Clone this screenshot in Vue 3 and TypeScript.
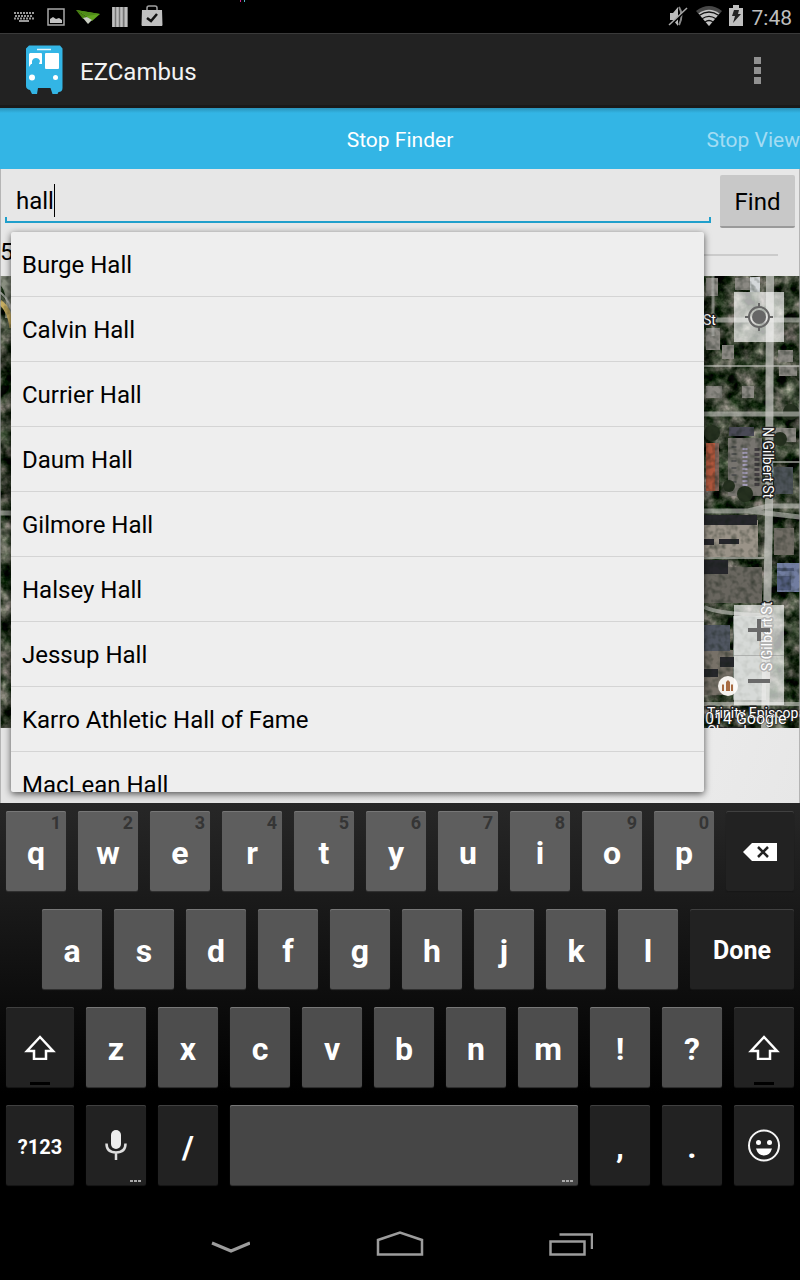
<script setup lang="ts">
import { ref } from 'vue'

interface Key {
  label: string
  hint?: string
  kind?: 'wide' | 'done' | 'space'
  dark?: boolean
  icon?: 'delete' | 'shift' | 'mic' | 'smile'
  small?: boolean
  more?: boolean
}

const query = ref('hall')
const radius = ref(5)

const stops: string[] = [
  'Burge Hall',
  'Calvin Hall',
  'Currier Hall',
  'Daum Hall',
  'Gilmore Hall',
  'Halsey Hall',
  'Jessup Hall',
  'Karro Athletic Hall of Fame',
  'MacLean Hall',
]

const letters = (text: string): Key[] => text.split('').map((label) => ({ label }))

const rows: Key[][] = [
  [
    ...'qwertyuiop'.split('').map((label, i) => ({ label, hint: String((i + 1) % 10) })),
    { label: 'Delete', icon: 'delete', kind: 'wide', dark: true },
  ],
  [...letters('asdfghjkl'), { label: 'Done', kind: 'done', dark: true }],
  [
    { label: 'Shift', icon: 'shift', kind: 'wide', dark: true },
    ...letters('zxcvbnm!?'),
    { label: 'Shift', icon: 'shift', dark: true },
  ],
  [
    { label: '?123', kind: 'wide', dark: true, small: true },
    { label: 'Voice input', icon: 'mic', dark: true, more: true },
    { label: '/', dark: true },
    { label: '', kind: 'space', more: true },
    { label: ',', dark: true },
    { label: '.', dark: true },
    { label: 'Emoji', icon: 'smile', dark: true },
  ],
]
</script>

<template>
  <div class="screen">
    <div class="status">
      <svg class="pixels" viewBox="0 0 6 2" width="6" height="2"><path d="M0 0h1v2H0z" fill="#d3258c" /><path d="M4 0h1v2H4z" fill="#4fb5c4" /></svg>
      <div class="status-group">
        <svg viewBox="14 0 22 33" width="22" height="33">
          <g fill="none" stroke="#9a9a9a" stroke-width="2">
            <path d="M14 13h20" stroke-dasharray="2 1" />
            <path d="M15 16h18" stroke-dasharray="2 1" />
            <path d="M14 18.500h20" stroke-dasharray="2 1" />
            <path d="M19 21h10" />
          </g>
        </svg>
        <svg viewBox="46 0 20 33" width="20" height="33">
          <path d="M48 9h16v16H48z" fill="none" stroke="#a8a8a8" stroke-width="1.500" />
          <path d="M50 23v-4l3-2 3 2 3-1 3 2v3z" fill="#c4c4c4" />
        </svg>
        <svg viewBox="76 0 24 33" width="24" height="33">
          <path d="M76 10l24 4-8 7-5-4z" fill="#62a51f" />
          <path d="M76 10l7 9 4-2z" fill="#4c8714" />
          <path d="M76 10l24 4-13 2z" fill="#4f8c18" />
          <path d="M83 18l4-1 5 3-4 4z" fill="#c9cfc2" />
        </svg>
        <svg viewBox="110 0 20 33" width="20" height="33">
          <path d="M112 7h16v20h-16z" fill="#777" />
          <path d="M113.500 7v20M117.500 7v20M121.500 7v20M125.800 7v20" stroke="#c0c0c0" stroke-width="2.500" />
        </svg>
        <svg viewBox="140 0 24 33" width="24" height="33">
          <path d="M147 10V8q0-2 2-2h6q2 0 2 2v2" fill="none" stroke="#a0a0a0" stroke-width="1.500" />
          <path d="M142 10h20l.5 15-.5 1h-20l-.5-1z" fill="#c0c0c0" />
          <path d="M147 18l4 3 6-7" fill="none" stroke="#111" stroke-width="2.500" />
        </svg>
      </div>
      <div class="status-group right">
        <svg viewBox="668 0 20 33" width="20" height="33">
          <path d="M670 13h3l5-6v19l-5-6h-3z" fill="#bbb" />
          <path d="M679 7q5 8 0 18" fill="none" stroke="#888" stroke-width="2" />
          <path d="M671 25L687 9" stroke="#000" stroke-width="2" />
          <path d="M669 25L687 8" stroke="#aaa" stroke-width="1.500" />
        </svg>
        <svg viewBox="696 0 26 33" width="26" height="33">
          <path d="M696 11Q709 1 722 11l-13 15z" fill="#484848" />
          <path d="M698.500 13.500Q709 6 719.500 13.500L709 26z" fill="#c4c4c4" />
          <path d="M699 15.500q10-7 20 0M702 18.800q7-5 14 0M705 22q4-3 8 0" fill="none" stroke="#111" stroke-width="1.300" />
        </svg>
        <svg viewBox="730 0 14 33" width="14" height="33" overflow="visible">
          <path d="M729 8h4V5h6v3h4v18h-14z" fill="#c0c0c0" />
          <path d="M734 10h5l-1 4h3l-8 9 2-7h-3z" fill="#222" />
        </svg>
        <span class="time">7:48</span>
      </div>
    </div>

    <header class="action-bar">
      <svg class="bus" viewBox="25 44 39 52" width="39" height="52">
        <path d="M29 45.500h31l2.500 3V88q0 4-4 4l-1 2h-5l-2-6H38l-1 6h-5l-2-4q-4-1-4-4V48.500z" fill="#33b5e5" />
        <path d="M37 49.500h14" fill="none" stroke="#e6f7fd" stroke-width="1.500" />
        <path d="M30 53h11q1 0 1 1v10h-3l1-3q-1-3-4-3t-4 3v3h-1l-2 3V54zM46 53h12q1 0 1 1v14q0 1-1 1H46q-1 0-1-1V54q0-1 1-1z" fill="#fff" />
        <circle cx="32" cy="77.500" r="3" fill="#fff" />
        <circle cx="55.500" cy="77.500" r="2.500" fill="#fff" />
      </svg>
      <h1>EZCambus</h1>
      <button class="overflow" type="button" aria-label="More options"><i></i><i></i><i></i></button>
    </header>

    <nav class="tabs">
      <a class="tab current" href="#finder">Stop Finder</a>
      <a class="tab next" href="#view">Stop View</a>
    </nav>

    <main class="content">
      <form class="search" @submit.prevent>
        <div class="field">
          <input v-model="query" type="text" aria-label="Search stops" />
          <span class="caret"></span>
        </div>
        <button class="find" type="submit">Find</button>
      </form>
      <div class="range-row">
        <label for="radius">5</label>
        <input id="radius" v-model="radius" type="range" min="0" max="20" />
      </div>

      <div class="map">
        <svg class="aerial" viewBox="0 276 800 452" preserveAspectRatio="xMaxYMin slice">
          <defs>
            <filter id="trees" x="0" y="0" width="100%" height="100%" color-interpolation-filters="sRGB">
              <feTurbulence type="fractalNoise" baseFrequency="0.07" numOctaves="4" seed="8" />
              <feColorMatrix values="1.300 0.1 0 0 -0.470  1.100 0.2 0 0 -0.380  1.200 0.1 0 0 -0.450  0 0 0 0 1" />
            </filter>
            <filter id="grain" x="0" y="0" width="100%" height="100%" color-interpolation-filters="sRGB">
              <feTurbulence type="fractalNoise" baseFrequency="0.16" numOctaves="2" seed="3" />
              <feColorMatrix values="0 0 0 0 0.080  0 0 0 0 0.120  0 0 0 0 0.080  1.800 0 0 0 -0.750" />
            </filter>
          </defs>
          <rect y="276" width="800" height="452" filter="url(#trees)" />
          <g fill="#8b8983">
            <path d="M706 278h12v18h-12zM735 278h18v12h-18zM706 328h14v22h-14zM722 345h12v14h-12zM778 350h15v12h-15zM706 386h16v12h-16zM742 386h12v12h-12zM779 366h18v10h-18zM776 428h20v14h-20z" />
            <path d="M728 438h34v58h-34z" fill="#77746f" />
            <path d="M704 520h54v37h-54z" fill="#9a9388" />
            <path d="M704 567h58v36h-58z" fill="#69665f" />
            <path d="M774 528h20v27h-20z" fill="#706c64" />
            <path d="M704 650h30v45h-30z" fill="#777168" />
            <path d="M733 616h33v84h-33z" fill="#8b948c" />
          </g>
          <path d="M750 277h10v15h-10z" fill="#d4d8da" />
          <path d="M706 443h9v48h-9z" fill="#b0573d" />
          <path d="M715 443h4v48h-4z" fill="#83635a" />
          <path d="M729 427h25v9h-25z" fill="#4a4a56" />
          <path d="M774 467h19v27h-19z" fill="#4d5359" />
          <path d="M704 515h53v10h-53zM704 539h10v6h-10zM719 539h20v5h-20zM704 560h24v14h-24z" fill="#26262b" />
          <path d="M777 563h23v29h-23z" fill="#717da0" />
          <path d="M777 568h17v3h-17zM777 576h14v14h-14z" fill="#535e80" />
          <path d="M704 625h26v26h-26z" fill="#505661" />
          <path d="M720 657h14v10h-14zM704 669h14v8h-14z" fill="#25262a" />
          <g stroke-width="5" fill="none">
            <path d="M745 448v38" stroke="#a8a0bd" stroke-dasharray="2 2" />
            <path d="M757 448v40" stroke="#443f43" stroke-dasharray="3 2" />
            <path d="M734 446v38" stroke="#555" stroke-dasharray="2 5" />
          </g>
          <g fill="#25301f">
            <circle cx="745" cy="494" r="8" /><circle cx="729" cy="486" r="6" /><circle cx="712" cy="433" r="8" />
            <circle cx="780" cy="439" r="7" /><circle cx="791" cy="412" r="8" />
          </g>
          <path d="M0 276h11v42H5Q8 292 0 285z" fill="#8b9082" />
          <path d="M0 302q10 8 12 26" fill="none" stroke="#c7ad61" stroke-width="5" />
          <path d="M0 292q12 10 12 24" fill="none" stroke="#babbb5" stroke-width="2" />
          <rect y="276" width="800" height="452" filter="url(#grain)" opacity="0.600" />
          <g fill="none" stroke="#c6c6c2">
            <path d="M770 276l-1 235-4 217" stroke-width="8" stroke-opacity="0.750" />
            <path d="M713 276v60" stroke-width="3" stroke-opacity="0.500" />
            <path d="M700 320h100M704 414h96M0 513h11M700 511h48l52 6M748 511l20-5h32" stroke-width="5" stroke-opacity="0.600" />
            <path d="M704 366h96M704 558h60M770 462h30" stroke-width="2" stroke-opacity="0.600" />
            <path d="M704 607q14 7 60 8M704 704h96" stroke-width="4" stroke-opacity="0.600" />
          </g>
          <g class="labels">
            <text x="703" y="325">St</text>
            <text transform="translate(763 427) rotate(90)">N Gilbert St</text>
            <text transform="translate(772 671) rotate(-90)">S Gilbert St</text>
            <text x="707" y="718">Trinity Episcopal</text>
            <text x="707" y="736">Church</text>
            <text class="google" x="705" y="724">014 Google</text>
          </g>
          <circle cx="728" cy="686" r="10" fill="#f5f2ee" />
          <path d="M722 691v-6l1-1 1 1v6zM726 691v-9l2-2 2 2v9zM731 691v-6l1-1 1 1v6z" fill="#a76a41" />
        </svg>
        <button class="locate" type="button" aria-label="My location">
          <svg viewBox="0 0 28 28" width="28" height="28">
            <g fill="none" stroke="#666" stroke-width="2"><circle cx="14" cy="14" r="10" /><path d="M14 0v4M14 24v4M0 14h4M24 14h4" /></g>
            <circle cx="14" cy="14" r="7" fill="#666" />
          </svg>
        </button>
        <div class="zoom">
          <button type="button" aria-label="Zoom in"><svg viewBox="0 0 22 22" width="22" height="22"><path d="M0 11h22M11 0v22" stroke="#6a6a6a" stroke-width="4" /></svg></button>
          <button type="button" aria-label="Zoom out"><svg viewBox="0 0 22 22" width="22" height="22"><path d="M0 11h22" stroke="#6a6a6a" stroke-width="4" /></svg></button>
        </div>
      </div>
      <div class="below-map"></div>

      <ul class="suggestions">
        <li v-for="stop in stops" :key="stop">
          <button type="button" @click="query = stop">{{ stop }}</button>
        </li>
      </ul>
    </main>

    <section class="keyboard" aria-label="Keyboard">
      <div v-for="(row, r) in rows" :key="r" class="key-row" :class="{ indented: r === 1 }">
        <button
          v-for="(key, k) in row"
          :key="k"
          type="button"
          class="key"
          :class="[key.kind, { dark: key.dark, small: key.small }]"
          :aria-label="key.label || 'Space'"
        >
          <span v-if="key.hint" class="hint">{{ key.hint }}</span>
          <svg v-if="key.icon === 'delete'" viewBox="0 0 36 20" width="36" height="20">
            <path d="M1 11l9-9h25v18H10z" fill="#fff" />
            <path d="M16 6l10 10M26 6L16 16" stroke="#222" stroke-width="2.500" />
          </svg>
          <template v-else-if="key.icon === 'shift'">
            <svg viewBox="0 0 32 26" width="32" height="26">
              <path d="M16 3L3 17h7v8h12v-8h7z" fill="none" stroke="#fff" stroke-width="2.500" />
            </svg>
            <span class="lock"></span>
          </template>
          <svg v-else-if="key.icon === 'mic'" viewBox="0 0 22 30" width="22" height="30">
            <rect x="6" y="0" width="10" height="19" rx="5" fill="#eee" />
            <path d="M1.500 13.500q0 9 9.500 9t9.500-9M11 22v8" fill="none" stroke="#ddd" stroke-width="2.500" />
          </svg>
          <svg v-else-if="key.icon === 'smile'" viewBox="0 0 34 34" width="34" height="34">
            <circle cx="17" cy="17.500" r="15" fill="none" stroke="#f5f5f5" stroke-width="2" />
            <circle cx="11.500" cy="14.500" r="2.500" fill="#fff" /><circle cx="22.500" cy="14.500" r="2.500" fill="#fff" />
            <path d="M9 20.500h16q-2 7-8 7t-8-7z" fill="#fff" />
          </svg>
          <span v-else class="glyph">{{ key.label }}</span>
          <span v-if="key.more" class="more"><i></i><i></i><i></i></span>
        </button>
      </div>
    </section>

    <footer class="system">
      <button type="button" aria-label="Hide keyboard"><svg viewBox="210 1228 40 32" width="40" height="32"><path d="M212 1243l19 8 19-8" fill="none" stroke="#9c9c9c" stroke-width="3" /></svg></button>
      <button type="button" aria-label="Home"><svg viewBox="375 1228 50 32" width="50" height="32"><path d="M378 1254.500v-14.500l22-7.500 22 7.500v14.500z" fill="none" stroke="#9c9c9c" stroke-width="2.500" /></svg></button>
      <button type="button" aria-label="Recent apps"><svg viewBox="547 1228 46 32" width="46" height="32"><path d="M550.500 1241.500h34v13h-34zM559.500 1234.500h32.500v14.500" fill="none" stroke="#9c9c9c" stroke-width="2.500" /></svg></button>
    </footer>
  </div>
</template>

<style>
body {
  margin: 0;
  background: #000;
}
</style>

<style scoped>
.screen {
  display: flex;
  flex-direction: column;
  min-height: 100vh;
  overflow: hidden;
  font-family: Roboto, 'Noto Sans', sans-serif;
  color: #000;
  background: #000;
}
button {
  margin: 0;
  padding: 0;
  border: 0;
  font-family: inherit;
  color: inherit;
  background: none;
}
svg {
  display: block;
  flex: none;
}
.status {
  position: relative;
  display: flex;
  justify-content: space-between;
  height: 33px;
  padding: 0 8px 0 14px;
}
.pixels {
  position: absolute;
  left: 30%;
  top: 0;
}
.status-group {
  display: flex;
  gap: 10px;
}
.status-group.right {
  gap: 8px;
}
.time {
  font-size: 21px;
  line-height: 36px;
  color: #bebebe;
}
.action-bar {
  display: flex;
  align-items: center;
  box-sizing: border-box;
  height: 75px;
  padding: 0 25px;
  border-top: 1px solid #3a3a3a;
  border-bottom: 3px solid #1a1a1a;
  background: #222;
}
h1 {
  flex: 1;
  margin: 0 0 0 16px;
  padding-top: 4px;
  font-size: 24px;
  line-height: 32px;
  font-weight: 400;
  color: #f3f3f3;
}
.overflow {
  display: grid;
  gap: 3px;
  padding: 2px 14px 0;
}
.overflow i {
  width: 7px;
  height: 7px;
  background: #919191;
}
.tabs {
  display: grid;
  grid-template-columns: 1fr auto 1fr;
  align-items: center;
  height: 61px;
  overflow: hidden;
  background: linear-gradient(#2a93ba, #33b5e5 5px);
}
.tab {
  padding-top: 2px;
  font-size: 21px;
  line-height: 28px;
  white-space: nowrap;
  text-decoration: none;
  color: #fff;
}
.current {
  grid-column: 2;
}
.next {
  justify-self: end;
  color: #a3dcf3;
}
.content {
  position: relative;
  display: flex;
  flex: 1;
  flex-direction: column;
  background: #e7e7e7;
}
.content::after {
  position: absolute;
  inset: 0;
  border: solid #a0a0a0;
  border-width: 0 1px;
  opacity: 0.7;
  pointer-events: none;
  content: '';
}
.search {
  display: flex;
  align-items: flex-start;
  gap: 9px;
  padding: 6px 5px 0;
}
.field {
  position: relative;
  flex: 1;
  height: 46px;
  border-bottom: 2px solid #209fcb;
}
.field::after {
  position: absolute;
  inset: auto 0 0;
  height: 4px;
  border: solid #209fcb;
  border-width: 0 2px;
  pointer-events: none;
  content: '';
}
.field input {
  box-sizing: border-box;
  width: 100%;
  height: 46px;
  padding: 6px 11px 0;
  border: 0;
  outline: 0;
  font: 24px/32px Roboto, 'Noto Sans', sans-serif;
  color: #000;
  background: none;
}
.caret {
  position: absolute;
  left: 49px;
  top: 9px;
  width: 1px;
  height: 33px;
  background: #000;
}
.find {
  width: 75px;
  height: 53px;
  padding-top: 2px;
  border-bottom: 2px solid #9a9a9a;
  border-radius: 2px;
  font-size: 24px;
  line-height: 32px;
  background: #c8c8c8;
}
.range-row {
  display: flex;
  align-items: center;
  gap: 16px;
  height: 48px;
  padding-right: 22px;
}
.range-row label {
  font-size: 24px;
  line-height: 32px;
}
.range-row input {
  flex: 1;
  height: 2px;
  margin: 6px 0 0;
  appearance: none;
  background: #cbcbcb;
}
.map {
  position: relative;
  flex: 1;
  min-height: 240px;
  overflow: hidden;
}
.aerial {
  position: absolute;
  inset: 0;
  width: 100%;
  height: 100%;
}
.labels {
  font-size: 14px;
  fill: #fff;
  stroke: #222;
  stroke-width: 3px;
  stroke-linejoin: round;
  paint-order: stroke;
}
.labels .google {
  font-size: 16px;
  stroke-width: 1px;
}
.locate,
.zoom {
  position: absolute;
  right: 16px;
  width: 50px;
  background: rgba(255, 255, 255, 0.66);
}
.locate {
  display: grid;
  place-items: center;
  top: 16px;
  height: 50px;
}
.zoom {
  bottom: 23px;
}
.zoom button {
  display: grid;
  place-items: center;
  box-sizing: border-box;
  width: 50px;
  height: 50px;
}
.zoom button + button {
  border-top: 1px solid rgba(120, 120, 120, 0.4);
}
.below-map {
  height: 75px;
  background: linear-gradient(110deg, #e4e4e4 30%, #ededed 75%, #e7e7e7);
}
.suggestions {
  position: absolute;
  z-index: 1;
  inset: 63px 96px 11px 11px;
  margin: 0;
  padding: 0;
  overflow: hidden;
  list-style: none;
  border-radius: 2px;
  background: #eee;
  box-shadow: 0 2px 7px rgba(0, 0, 0, 0.65);
}
.suggestions button {
  display: block;
  width: 100%;
  height: 65px;
  padding: 2px 11px 0;
  border-bottom: 1px solid #d4d4d4;
  font-size: 24px;
  line-height: 32px;
  text-align: left;
}
.keyboard {
  display: grid;
  gap: 18px;
  padding: 8px 6px 23px;
  background: linear-gradient(#272727, #000 290px);
}
.key-row {
  display: flex;
  gap: 12px;
}
.indented {
  padding-left: 36px;
}
.key {
  position: relative;
  display: flex;
  flex: 60 1 0;
  align-items: center;
  justify-content: center;
  min-width: 0;
  height: 80px;
  border-radius: 2px;
  font-size: 32px;
  line-height: 40px;
  font-weight: 700;
  color: #fff;
  background: #5e5e5e;
  box-shadow: inset 0 1px #777, 0 1px 1px #333;
}
.key-row:nth-child(2) .key {
  background: #565656;
}
.key-row:nth-child(3) .key {
  background: #4d4d4d;
}
.key-row:nth-child(4) .key {
  background: #464646;
}
.key-row .key.dark {
  background: #222;
  box-shadow: inset 0 1px #404040, 0 1px 1px #181818;
}
.key.wide {
  flex-grow: 68;
}
.key.done {
  flex-grow: 104;
  font-size: 25px;
}
.key.space {
  flex-grow: 348;
}
.key.small {
  font-size: 20px;
}
.glyph {
  padding-top: 3px;
}
.hint {
  position: absolute;
  top: 2px;
  right: 5px;
  font-size: 18px;
  line-height: 20px;
  color: #353535;
}
.lock {
  position: absolute;
  bottom: 2px;
  width: 20px;
  height: 3px;
  background: #000;
}
.more {
  position: absolute;
  right: 5px;
  bottom: 3px;
  display: flex;
  gap: 1px;
}
.more i {
  width: 3px;
  height: 2px;
  background: #aaa;
}
.system {
  display: grid;
  grid-template-columns: 50px 50px 50px;
  justify-content: center;
  gap: 120px;
  height: 72px;
}
.system button {
  display: grid;
  place-items: center;
}
</style>
